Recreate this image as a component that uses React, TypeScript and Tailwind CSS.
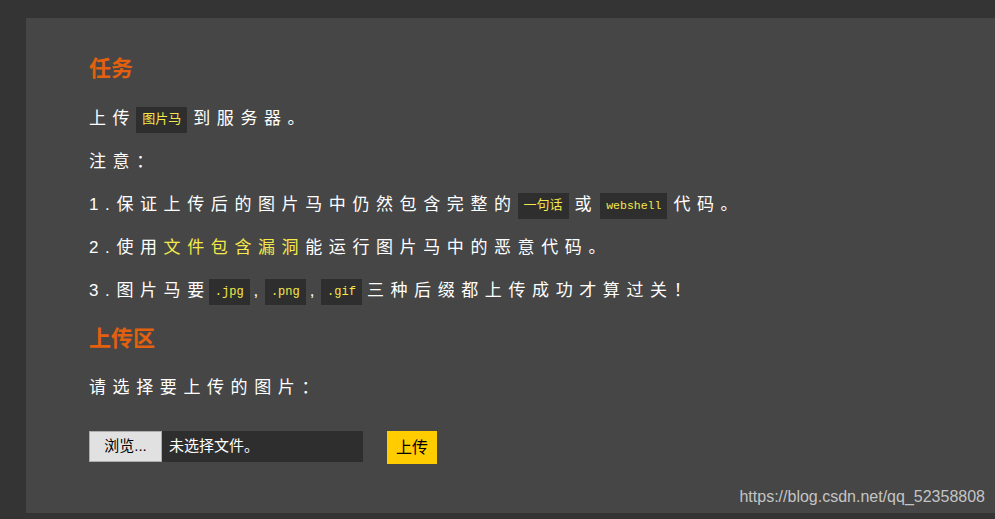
import React from "react";

const Code: React.FC<{ children: React.ReactNode; className?: string }> = ({
  children,
  className = "",
}) => (
  <span
    className={`inline-block h-[26px] bg-[#2e2e2e] px-[6px] align-middle leading-[26px] tracking-normal text-[#f5e84a] ${className}`}
    style={{ fontFamily: '"Liberation Mono", "Noto Sans CJK SC", monospace' }}
  >
    {children}
  </span>
);

const App: React.FC = () => {
  return (
    <div
      className="relative min-h-[519px] w-full bg-[#343434] pl-[26px] pt-[18px] pb-[6px]"
      style={{ fontFamily: '"Liberation Sans", "Noto Sans CJK SC", sans-serif' }}
    >
      <section className="h-[495px] bg-[#464646] pl-[63px] pt-[36px]">
        <h2 className="h-[30px] text-[22px] font-bold leading-[30px] text-[#e2600e]">
          任务
        </h2>

        <div className="mt-[13px] text-[17px] leading-[43px] tracking-[6.6px] text-white">
          <p>
            上传<Code className="mr-[6px] text-[13px]">图片马</Code>到服务器。
          </p>
          <p>注意：</p>
          <p>
            1.保证上传后的图片马中仍然包含完整的
            <Code className="mr-[6px] text-[13px]">一句话</Code>或
            <Code className="ml-[2px] mr-[6px] text-[11.5px]">webshell</Code>代码。
          </p>
          <p>
            2.使用<span className="text-[#f5e84a]">文件包含漏洞</span>
            能运行图片马中的恶意代码。
          </p>
          <p>
            3.图片马要<Code className="ml-[-2px] mr-[4px] text-[12px]">.jpg</Code>,
            <Code className="mr-[4px] text-[12px]">.png</Code>,
            <Code className="mr-[5px] text-[12px]">.gif</Code>三种后缀都上传成功才算过关！
          </p>
        </div>

        <h2 className="mt-[12px] h-[30px] text-[22px] font-bold leading-[30px] text-[#e2600e]">
          上传区
        </h2>

        <p className="mt-[12px] text-[17px] leading-[43px] tracking-[6.6px] text-white">
          请选择要上传的图片：
        </p>

        <div className="mt-[22px] flex items-start">
          <div className="flex h-[31px] w-[274px] items-center bg-[#2e2e2e]">
            <button className="flex h-[31px] w-[73px] items-center justify-center border border-[#adadad] bg-[#e1e1e1] text-[15px] text-black">
              浏览...
            </button>
            <span className="ml-[7px] text-[15px] text-white">未选择文件。</span>
          </div>
          <button className="ml-[24px] flex h-[33px] w-[50px] items-center justify-center bg-[#ffcc00] text-[16px] text-black">
            上传
          </button>
        </div>
      </section>

      <span
        className="absolute bottom-[10px] right-[10px] text-[16px] text-[#c4c4c4]"
        style={{ fontFamily: '"Liberation Sans", Arial, sans-serif' }}
      >
        https://blog.csdn.net/qq_52358808
      </span>
    </div>
  );
};

export default App;
